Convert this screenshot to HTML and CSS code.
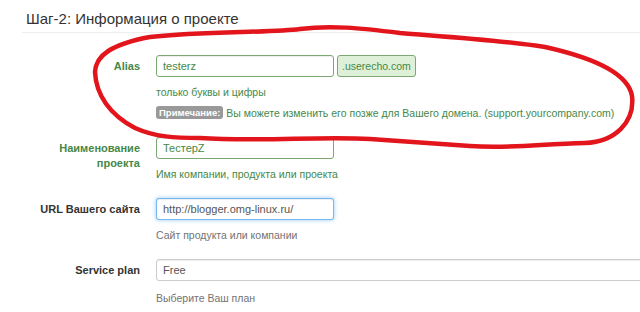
FILE: index.html
```html
<!DOCTYPE html>
<html lang="ru">
<head>
    <meta charset="UTF-8">
    <title>Шаг-2: Информация о проекте</title>
    <link rel="stylesheet" href="styles.css">
</head>
<body>

    <div class="page">
        <h2 class="step-title">Шаг-2: Информация о проекте</h2>

        <!-- Alias -->
        <div class="form-row success">
            <label class="row-label" for="alias">Alias</label>
            <div class="controls">
                <div class="input-line">
                    <input type="text" id="alias" class="field field-short" value="testerz">
                    <span class="addon">.userecho.com</span>
                </div>
                <div class="help">только буквы и цифры</div>
                <div class="help note"><span class="badge">Примечание:</span> Вы можете изменить его позже для Вашего домена. (support.yourcompany.com)</div>
            </div>
        </div>

        <!-- Project name -->
        <div class="form-row success">
            <label class="row-label" for="projectName">Наименование проекта</label>
            <div class="controls">
                <input type="text" id="projectName" class="field field-short" value="ТестерZ">
                <div class="help">Имя компании, продукта или проекта</div>
            </div>
        </div>

        <!-- Site URL -->
        <div class="form-row">
            <label class="row-label" for="siteUrl">URL Вашего сайта</label>
            <div class="controls">
                <input type="text" id="siteUrl" class="field field-short focused" value="http://blogger.omg-linux.ru/">
                <div class="help">Сайт продукта или компании</div>
            </div>
        </div>

        <!-- Plan -->
        <div class="form-row">
            <label class="row-label" for="plan">Service plan</label>
            <div class="controls">
                <div class="field field-wide" id="plan">Free</div>
                <div class="help help-plan">Выберите Ваш план</div>
            </div>
        </div>
    </div>

    <!-- Red marker scribble over the alias block -->
    <svg class="scribble" width="640" height="312" viewBox="0 0 640 312">
        <path d="M150,37 C205,31 270,33 300,29 C330,25 360,28 400,33 C450,37 500,40 545,47 C590,57 628,72 632,96 C635,122 615,142 585,143 C540,144 510,149 470,146 C430,143 400,141 370,139 C320,136 260,142 200,138 C175,138 155,137 135,128 C110,115 96,95 95,72 C96,55 112,44 150,37 Z"
              fill="none" stroke="#e3151c" stroke-width="4.5" stroke-linejoin="round"/>
    </svg>

</body>
</html>
```

FILE: styles.css
```css
body {
    margin: 0;
    font-family: "Liberation Sans", Arial, sans-serif;
    font-size: 11px;
    color: #333;
    background-color: #fff;
    overflow: hidden;
}
.page {
    margin-left: 22px;
}
.step-title {
    margin: 8px 0 22px;
    padding: 0 4px 3px;
    font-size: 15px;
    font-weight: normal;
    line-height: 21px;
    color: #333;
    border-bottom: 1px solid #eee;
}
.form-row {
    display: flex;
    gap: 16px;
    margin-bottom: 15px;
}
.row-label {
    width: 118px;
    flex-shrink: 0;
    padding-top: 4px;
    text-align: right;
    font-weight: bold;
    line-height: 15px;
    color: #333;
}
.controls {
    flex: 1;
    min-width: 0;
}
.input-line {
    display: flex;
    gap: 3px;
}
.field {
    display: block;
    box-sizing: border-box;
    height: 22px;
    margin: 0;
    padding: 0 6px;
    font-family: inherit;
    font-size: 11px;
    line-height: 20px;
    color: #555;
    background-color: #fff;
    border: 1px solid #ccc;
    border-radius: 3px;
    box-shadow: inset 0 1px 1px rgba(0, 0, 0, 0.075);
}
.field-short {
    width: 178px;
}
.field-wide {
    width: 520px;
}
.field.focused {
    border-color: rgba(82, 168, 236, 0.8);
    box-shadow: inset 0 1px 1px rgba(0, 0, 0, 0.075), 0 0 4px rgba(82, 168, 236, 0.6);
}
.addon {
    box-sizing: border-box;
    height: 22px;
    padding: 0 4px;
    font-size: 10.5px;
    line-height: 20px;
    color: #468847;
    background-color: #dff0d8;
    border: 1px solid #7aaa72;
    border-radius: 3px;
}
.help {
    margin-top: 6px;
    font-size: 10.5px;
    line-height: 18px;
    color: #737373;
    white-space: nowrap;
}
.help.note {
    margin-top: 3px;
}
.help.help-plan {
    margin-top: 8px;
}
.badge {
    display: inline-block;
    padding: 0 3px;
    font-size: 9.5px;
    font-weight: bold;
    line-height: 13px;
    color: #fff;
    background-color: #999;
    border-radius: 3px;
    vertical-align: 1px;
}

/* success state */
.success .row-label,
.success .help {
    color: #468847;
}
.success .field {
    color: #468847;
    border-color: #7aaa72;
}

.scribble {
    position: absolute;
    top: 0;
    left: 0;
    pointer-events: none;
}
```
